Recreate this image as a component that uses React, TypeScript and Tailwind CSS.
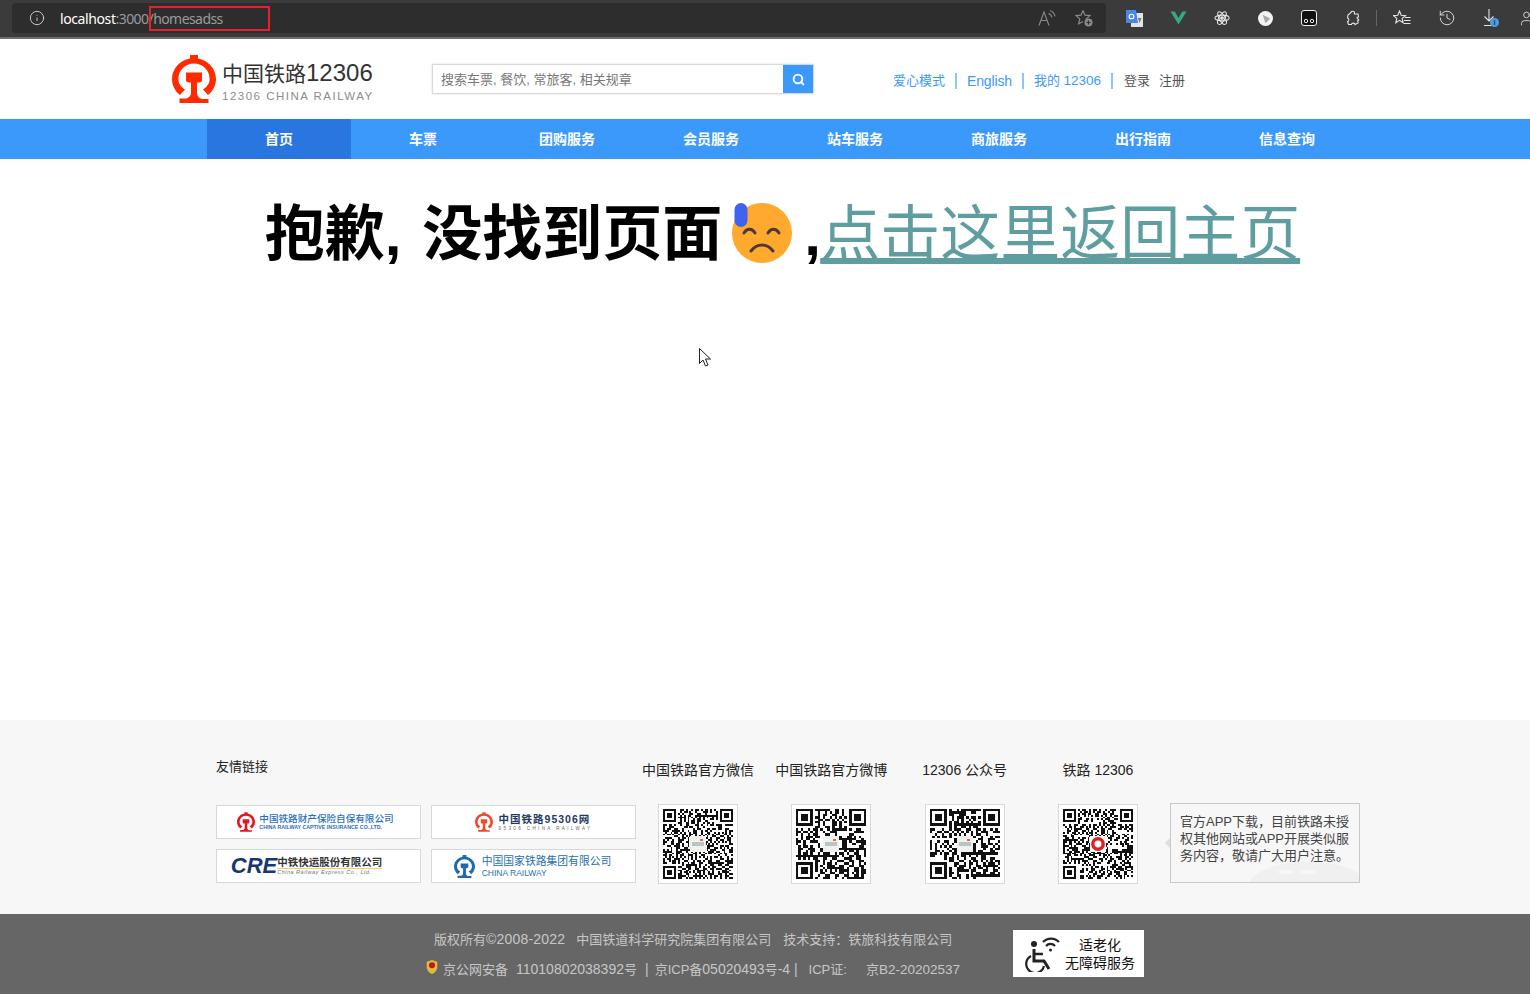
import { Info, Search, History, User } from 'lucide-react';

const navItems = ['首页', '车票', '团购服务', '会员服务', '站车服务', '商旅服务', '出行指南', '信息查询'];

function RailLogo({ color, className }: { color: string; className: string }) {
  return (
    <svg viewBox="0 0 44 48" className={className} fill={color}>
      <path d="M18 0h8v3.400C36 5.200 44 13.600 44 24c0 6.600-3.200 12.400-8 16l-5-5.400c4-2.600 6.600-6 6.600-10.600 0-8.600-7-15.400-15.600-15.400S6.400 15.400 6.400 24c0 4.600 2.600 8 6.600 10.600L8 40c-4.800-3.600-8-9.400-8-16C0 13.600 8 5.200 18 3.400z" />
      <path d="M14 17.500h16v7.500c0 1.500-1 2.500-3 2.500h-2v11c0 3 2 4.500 5 5.500h6.500V48H7.500v-4.500H14c3-1 5-2.500 5-5.500V27.500h-2c-2 0-3-1-3-2.500z" />
    </svg>
  );
}

function Qr({ seed, cells, dot }: { seed: number; cells: number; dot?: boolean }) {
  let s = seed;
  const next = () => {
    s = (s * 1103515245 + 12345) & 0x7fffffff;
    return (s >> 12) & 1;
  };
  const inFinder = (x: number, y: number) => {
    const near = (a: number, b: number) => x >= a && x < a + 8 && y >= b && y < b + 8;
    return near(0, 0) || near(cells - 8, 0) || near(0, cells - 8);
  };
  let d = '';
  for (let y = 0; y < cells; y++) {
    for (let x = 0; x < cells; x++) {
      if (!inFinder(x, y) && next()) d += `M${x} ${y}h1v1h-1z`;
    }
  }
  const finder = (x: number, y: number) =>
    `M${x} ${y}h7v7h-7zM${x + 1} ${y + 1}v5h5v-5zM${x + 2} ${y + 2}h3v3h-3z`;
  const c = cells / 2;
  const logo = cells * 0.11;
  return (
    <div className="flex h-20 w-20 items-center justify-center border border-[#d8d8d8] bg-white">
      <svg viewBox={`0 0 ${cells} ${cells}`} className="h-[70px] w-[70px]" shapeRendering="crispEdges">
        <path d={d} fill="#111" />
        <path d={finder(0, 0) + finder(cells - 7, 0) + finder(0, cells - 7)} fill="#111" fillRule="evenodd" />
        {dot ? (
          <>
            <rect x={c - logo} y={c - logo} width={logo * 2} height={logo * 2} fill="#fff" />
            <circle cx={c} cy={c} r={logo * 0.9} fill="#d22" shapeRendering="auto" />
            <circle cx={c} cy={c} r={logo * 0.45} fill="#fff" shapeRendering="auto" />
          </>
        ) : (
          <>
            <rect x={c - logo} y={c - logo} width={logo * 2} height={logo * 2} fill="#f1f1ee" />
            <rect x={c - logo * 0.8} y={c - logo * 0.2} width={logo * 1.6} height={logo * 0.5} fill="#b9c4c4" />
            <rect x={c + logo * 0.3} y={c - logo * 0.7} width={logo * 0.3} height={logo * 0.3} fill="#d66" />
          </>
        )}
      </svg>
    </div>
  );
}

function LinkCard({ children }: { children: React.ReactNode }) {
  return (
    <div className="flex h-[34px] w-[205px] items-center justify-center border border-[#d8d8d8] bg-white">
      {children}
    </div>
  );
}

function QrColumn({ title, children }: { title: string; children: React.ReactNode }) {
  return (
    <div className="flex w-[133.33px] flex-col items-center">
      <div className="h-[47px] whitespace-nowrap pt-[3px] text-[14px] leading-[20px] text-[#222]">{title}</div>
      {children}
    </div>
  );
}

export default function App() {
  return (
    <div className="relative h-[996px] w-[1530px] overflow-hidden bg-white font-['Liberation_Sans','Noto_Sans_CJK_SC',sans-serif]">
      {/* browser chrome */}
      <div className="flex h-[39px] items-center border-b-2 border-[#6d6d6d] bg-[#3b3b3b] pb-px pl-3 font-['Noto_Sans','Noto_Sans_CJK_SC',sans-serif] text-[#d8d8d8]">
        <div className="relative flex h-[30px] w-[1094px] shrink-0 items-center rounded-[4px] bg-[#2d2d2d] pl-[17px] pr-[13px]">
          <Info size={16} strokeWidth={1.3} className="text-[#e0e0e0]" />
          <span className="ml-[15px] text-[14px] tracking-[-0.4px] text-white">localhost</span>
          <span className="text-[14px] tracking-[-0.57px] text-[#9a9a9a]">:3000/homesadss</span>
          <span className="absolute left-[137px] top-[3px] h-[25px] w-[121px] border-2 border-[#e8202a]" />
          <svg viewBox="0 0 18 16" className="ml-auto mr-[19px] h-[16px] w-[18px]" fill="none" stroke="#8a8a8a" strokeWidth="1.100">
            <path d="M1 15.500 6 2l5 13.500M3 10.500h6" />
            <path d="M10.500 3.500c2 .5 3 2 3.300 3.800M12 .8c2.500 .5 4.500 3 5 5.500" />
          </svg>
          <svg viewBox="0 0 18 18" className="h-[18px] w-[18px]" fill="none" stroke="#8a8a8a" strokeWidth="1.200">
            <path d="M8 1.500l2 4.700 5 .4-3.800 3.300 1 4.300" />
            <path d="M8 1.500 6 6.200l-5 .4 3.800 3.300-1.200 5L8 12.500" />
            <circle cx="13.500" cy="13.500" r="4" fill="#8a8a8a" stroke="none" />
            <path d="M11.500 13.500h4M13.500 11.500v4" stroke="#2d2d2d" />
          </svg>
        </div>
        <div className="ml-[20px] flex items-center">
          <svg viewBox="0 0 17 17" className="h-[17px] w-[17px]">
            <rect x="5" y="3" width="12" height="14" fill="#e4e4e4" />
            <path d="M0 0h10l2 13H0z" fill="#4a86e8" />
            <circle cx="5.500" cy="6.500" r="2.300" fill="none" stroke="#fff" strokeWidth="1.100" />
            <path d="M12 8h3.500l-2 5z" fill="#777" />
          </svg>
          <svg viewBox="0 0 18 16" className="ml-[27px] h-[16px] w-[17px]">
            <path d="M0.500 1h4.500l4 7 4-7h4.500L9 15z" fill="#35a97f" />
          </svg>
          <svg viewBox="0 0 18 18" className="ml-[27px] h-[16px] w-[16px]" fill="none" stroke="#e5e5e5" strokeWidth="1.200">
            <ellipse cx="9" cy="9" rx="8" ry="3.200" />
            <ellipse cx="9" cy="9" rx="8" ry="3.200" transform="rotate(60 9 9)" />
            <ellipse cx="9" cy="9" rx="8" ry="3.200" transform="rotate(120 9 9)" />
            <circle cx="9" cy="9" r="1.500" fill="#e5e5e5" />
          </svg>
          <svg viewBox="0 0 16 16" className="ml-[28px] h-[15px] w-[15px]">
            <circle cx="8" cy="8" r="8" fill="#f4f4f4" />
            <path d="M5 4l8 4-5 5z" fill="#a8a8a8" />
          </svg>
          <svg viewBox="0 0 16 16" className="ml-[28px] h-[16px] w-[16px]">
            <rect x="0.500" y="0.500" width="15" height="15" rx="2.500" fill="#111" stroke="#f0f0f0" />
            <circle cx="5" cy="11" r="1.700" fill="none" stroke="#f0f0f0" />
            <circle cx="11" cy="11" r="1.700" fill="none" stroke="#f0f0f0" />
          </svg>
          <svg viewBox="0 0 16 16" className="ml-[28px] h-[16px] w-[16px]" fill="none" stroke="#e5e5e5" strokeWidth="1.100">
            <path d="M6 2.500C6 .8 9.500 .8 9.500 2.500c0 .8-.3 1.300 0 1.500h3.500l.5 3c-1.800-.3-2 1-.5 2 1.200 .8.800 1.700-.2 1.500l.2 2.500-3 1.500c0-1.800-3.500-1.800-3.500 0H3.500l-1-3c1.800 0 1.800-3.500 0-3.500l.5-3z" />
          </svg>
          <div className="ml-[15px] h-[16px] w-px bg-[#666]" />
          <svg viewBox="0 0 18 17" className="ml-[16px] h-[17px] w-[18px]" fill="none" stroke="#e5e5e5" strokeWidth="1.100">
            <path d="M6.500 1l1.700 4.300 4.300.3-3.300 2.800 1 4.400-3.700-2.400-3.700 2.400 1-4.400L.5 5.600l4.300-.3z" />
            <path d="M12 7.500h5.500M11 10.500h6.500M11 13.500h6.500" />
          </svg>
          <History size={18} strokeWidth={1.2} className="ml-[27px] text-[#e5e5e5]" />
          <div className="relative ml-[27px] h-[18px] w-[18px]">
            <svg viewBox="0 0 14 18" className="h-[18px] w-[14px]" fill="none" stroke="#e5e5e5" strokeWidth="1.100">
              <path d="M6 0v12M1.500 7.500 6 12l4.500-4.500M1 16.500h10" />
            </svg>
            <span className="absolute left-[7px] top-[9px] flex h-[9px] w-[9px] items-center justify-center rounded-full bg-[#4a9fe0] text-[7px] font-bold leading-none text-[#1b3a57]">i</span>
          </div>
          <User size={17} strokeWidth={1.2} className="ml-[17px] shrink-0 text-[#e5e5e5]" />
        </div>
      </div>

      {/* site header */}
      <header className="flex h-[80px] items-center">
        <div className="ml-[172px] flex w-[260px] items-center">
          <RailLogo color="#ff2a00" className="h-[48px] w-[44px]" />
          <div className="ml-[6px] mt-[2px]">
            <div className="whitespace-nowrap text-[21px] leading-[30px] text-[#333]">
              中国铁路<span className="text-[24px]">12306</span>
            </div>
            <div className="whitespace-nowrap text-[11.5px] leading-[14px] tracking-[1.5px] text-[#8c8c8c]">12306 CHINA RAILWAY</div>
          </div>
        </div>
        <div className="flex h-[30px] w-[382px] border border-[#d9d9d9] shadow-[0_0_2px_#ddd]">
          <div className="flex-1 pl-2 text-[13px] leading-[30px] text-[#777]">搜索车票, 餐饮, 常旅客, 相关规章</div>
          <div className="flex w-[30px] items-center justify-center bg-[#3b99fc]">
            <Search size={13} strokeWidth={3.5} className="text-white" />
          </div>
        </div>
        <div className="ml-[79px] mt-[4px] flex items-center text-[13px] text-[#3b99fc]">
          <span>爱心模式</span>
          <span className="ml-[10px] h-[16px] w-[2px] bg-[#8cc4fc]" />
          <span className="ml-[10px] text-[14px] tracking-[-0.15px]">English</span>
          <span className="ml-[10px] h-[16px] w-[2px] bg-[#8cc4fc]" />
          <span className="ml-[10px]">我的 <span className="text-[13.5px]">12306</span></span>
          <span className="ml-[10px] h-[16px] w-[2px] bg-[#8cc4fc]" />
          <span className="ml-[11px] text-[#555]">登录</span>
          <span className="ml-[9px] text-[#555]">注册</span>
        </div>
      </header>

      {/* nav */}
      <nav className="flex h-10 bg-[#3b99fc] pl-[207px]">
        {navItems.map((item, i) => (
          <div
            key={item}
            className={`flex w-[144px] items-center justify-center text-[14px] font-bold text-white ${i === 0 ? 'bg-[#2a76e0]' : ''}`}
          >
            {item}
          </div>
        ))}
      </nav>

      {/* 404 message */}
      <main className="h-[561px] pt-[31px]">
        <h1 className="flex items-center justify-center pl-[35px] text-[60px] font-bold leading-[90px] text-black">
          <span className="[word-spacing:4px]">抱歉, 没找到页面</span>
          <svg viewBox="0 0 60 60" className="mb-[4px] ml-[10px] mr-[12px] h-[60px] w-[60px]">
            <circle cx="30" cy="30" r="30" fill="#ffa92e" />
            <rect x="2.500" y="0" width="13" height="24" rx="6.500" fill="#3f63f0" />
            <g fill="none" stroke="#4a3b3a" strokeWidth="3" strokeLinecap="round">
              <path d="M12 30c3-5 8-5 11 0" />
              <path d="M36 30c3-5 8-5 11 0" />
              <path d="M19 48c6-8 16-8 22 0" />
            </g>
          </svg>
          <span className="w-[16px]">,</span>
          <a href="#" className="font-normal text-[#5f9ea0] underline">点击这里返回主页</a>
        </h1>
      </main>

      {/* links and QR codes */}
      <section className="flex h-[194px] bg-[#f7f7f7] pl-[216px] pt-[37px]">
        <div className="w-[420px]">
          <div className="h-[48px] text-[13px] leading-[20px] text-[#222]">友情链接</div>
          <div className="grid grid-cols-[205px_205px] gap-x-[10px] gap-y-[10px]">
            <LinkCard>
              <div className="flex items-center pr-[6px]">
                <RailLogo color="#e8141c" className="h-[20px] w-[18px]" />
                <div className="ml-[4px] text-[#2a6fc0]">
                  <div className="whitespace-nowrap text-[9.6px] font-medium leading-[11px]">中国铁路财产保险自保有限公司</div>
                  <div className="whitespace-nowrap text-[5.3px] font-bold leading-[7px]">CHINA RAILWAY CAPTIVE INSURANCE CO.,LTD.</div>
                </div>
              </div>
            </LinkCard>
            <LinkCard>
              <RailLogo color="#f0492a" className="h-[20px] w-[18px]" />
              <div className="ml-[6px] text-[#1f3a60]">
                <div className="whitespace-nowrap text-[10.5px] font-bold leading-[12px] tracking-[1px]">中国铁路95306网</div>
                <div className="whitespace-nowrap text-[4.5px] leading-[7px] tracking-[2.4px] text-[#666]">95306 CHINA RAILWAY</div>
              </div>
            </LinkCard>
            <LinkCard>
              <div className="flex items-center pr-[24px]">
                <span className="text-[22px] font-bold italic leading-none text-[#17386f]">CRE</span>
                <div className="text-[#333]">
                  <div className="whitespace-nowrap text-[10.5px] font-bold leading-[11px]">中铁快运股份有限公司</div>
                  <div className="whitespace-nowrap border-t border-[#f0cc70] text-[5.5px] italic leading-[6px] tracking-[0.5px] text-[#777]">China Railway Express Co., Ltd.</div>
                </div>
              </div>
            </LinkCard>
            <LinkCard>
              <div className="flex items-center pr-[2px]">
                <RailLogo color="#1f69ad" className="h-[25px] w-[21px]" />
                <div className="ml-[7px] text-[#2a6fae]">
                  <div className="whitespace-nowrap text-[10.8px] leading-[14px]">中国国家铁路集团有限公司</div>
                  <div className="text-[8.5px] leading-[10px]">CHINA RAILWAY</div>
                </div>
              </div>
            </LinkCard>
          </div>
        </div>
        <div className="ml-[-4.67px] flex">
          <QrColumn title="中国铁路官方微信"><Qr seed={11} cells={37} /></QrColumn>
          <QrColumn title="中国铁路官方微博"><Qr seed={29} cells={29} /></QrColumn>
          <QrColumn title="12306 公众号"><Qr seed={47} cells={29} /></QrColumn>
          <QrColumn title="铁路 12306"><Qr seed={83} cells={37} dot /></QrColumn>
        </div>
        <div className="relative ml-[5.33px] mt-[46px] h-[80px] w-[190px] border border-[#c8c8c8] bg-[#f7f7f7] px-[9px] pt-[9px] text-[13px] leading-[17px] text-[#444]">
          <span className="absolute left-[-6px] top-[34px] h-0 w-0 border-y-[5px] border-r-[5px] border-y-transparent border-r-[#dedede]" />
          <svg viewBox="0 0 150 24" className="absolute bottom-0 right-0 h-[24px] w-[150px]" fill="#f0f0f0">
            <path d="M40 24c8-12 30-20 60-20 20 0 40 4 50 12v8z" />
            <path d="M70 12h14v4H70zM92 12h14v4H92z" fill="#f7f7f7" />
          </svg>
          <span className="relative">官方APP下载，目前铁路未授权其他网站或APP开展类似服务内容，敬请广大用户注意。</span>
        </div>
      </section>

      {/* copyright bar */}
      <footer className="flex h-[80px] bg-[#666] pl-[425px] pt-[15px] text-[13px] text-[#c6c6c6]">
        <div className="w-[588px]">
          <div className="h-[31px] whitespace-nowrap pl-[9px] text-[14px] leading-[20px]">
            <span className="text-[13px]">版权所有</span><span className="tracking-[0.2px]">©2008-2022</span><span className="ml-[11px] text-[13px]">中国铁道科学研究院集团有限公司</span><span className="ml-[12px] text-[13px]">技术支持：铁旅科技有限公司</span>
          </div>
          <div className="flex items-center whitespace-nowrap leading-[18px]">
            <svg viewBox="0 0 14 16" className="mb-[5px] h-[14px] w-[14px]">
              <path d="M1 2l6-2 6 2v6c0 4-3 7-6 8-3-1-6-4-6-8z" fill="#e2b93b" />
              <circle cx="7" cy="6" r="3.500" fill="#b5201c" />
            </svg>
            <span className="ml-[4px] text-[14px]">
              <span className="text-[13px]">京公网安备</span>
              <span className="ml-[8px]">11010802038392</span><span className="text-[13px]">号</span>
              <span className="ml-[8px]">|</span>
              <span className="ml-[6px] text-[13px]">京ICP备</span>05020493<span className="text-[13px]">号</span>-4 |
              <span className="ml-[11px] text-[13px]">ICP证:</span>
              <span className="ml-[19px] text-[13.5px]"><span className="text-[13px]">京</span>B2-20202537</span>
            </span>
          </div>
        </div>
        <div className="mt-px flex h-[47px] w-[131px] items-center bg-white pl-[12px]">
          <svg viewBox="0 0 36 36" className="h-[36px] w-[36px]" fill="none" stroke="#222" strokeWidth="2.200">
            <circle cx="9" cy="8" r="3" fill="#222" stroke="none" />
            <path d="M9 13v12h10l5 8" strokeWidth="3" />
            <path d="M9 18h9" strokeWidth="2.500" />
            <path d="M6 20a9 9 0 1 0 13 10" />
            <path d="M18 6a11 11 0 0 1 16 0M21 10a6 6 0 0 1 9 0" />
            <circle cx="25.500" cy="14" r="1.500" fill="#222" stroke="none" />
          </svg>
          <div className="ml-[4px] text-center text-[14px] leading-[18px] text-[#111]">
            <div>适老化</div>
            <div className="whitespace-nowrap">无障碍服务</div>
          </div>
        </div>
      </footer>

      {/* mouse pointer caught in the screenshot */}
      <svg viewBox="0 0 13 20" className="absolute left-[699px] top-[348px] h-[20px] w-[13px]">
        <path d="M0.500 0.500v15l3.500-3.500 2.500 6 2.500-1-2.500-6h5z" fill="#fff" stroke="#222" />
      </svg>
    </div>
  );
}
